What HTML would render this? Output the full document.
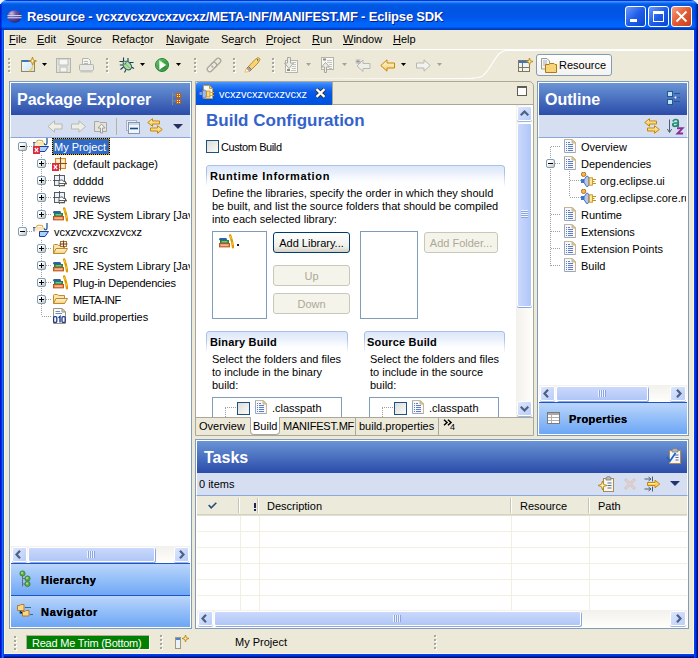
<!DOCTYPE html>
<html><head><meta charset="utf-8">
<style>
*{box-sizing:border-box;margin:0;padding:0}
html,body{width:698px;height:658px;overflow:hidden;background:#ECE9D8;font-family:"Liberation Sans",sans-serif;font-size:11px;color:#000;position:relative}
.a{position:absolute}
.t{position:absolute;white-space:nowrap;line-height:13px}
svg{position:absolute;overflow:visible}
#title{left:0;top:0;width:698px;height:30px;border-radius:7px 7px 0 0;
 background:linear-gradient(to bottom,#0831D9 0px,#0831D9 1px,#3D95FF 1px,#3D95FF 2px,#0A6AF3 3px,#0058E2 5px,#0054E3 12px,#0058EB 19px,#0062F8 22px,#0066FF 26px,#0066FF 27px,#0048D2 28px,#0035B8 30px)}
#lf{left:0;top:30px;width:5px;height:628px;background:linear-gradient(to right,#0010D0 0,#0010D0 1px,#0A30DA 1px,#0A30DA 2px,#1868F2 2px,#1868F2 3px,#0650E2 3px,#0650E2 4px,#FCF4DC 4px)}
#rf{left:693px;top:30px;width:5px;height:628px;background:linear-gradient(to right,#FCF4DC 0,#FCF4DC 1px,#0040F6 1px,#0040F6 2px,#0036E4 2px,#0036E4 3px,#0020B0 3px,#0020B0 4px,#001080 4px)}
#bf{left:4px;top:653px;width:690px;height:5px;background:linear-gradient(to bottom,#FCF4DC 0,#FCF4DC 1px,#0040F0 1px,#0040F0 2px,#0036E0 2px,#0036E0 3px,#0020A8 3px,#0020A8 4px,#001080 4px)}
.titletext{color:#fff;font-weight:bold;font-size:13px;letter-spacing:-0.18px;text-shadow:1px 1px 0 #0A1E8C}
.menu{top:33px}
.wb{position:absolute;top:6px;width:21px;height:21px;border:1px solid #fff;border-radius:3px}
.vbox{position:absolute;border:1px solid #7F9DB9;background:#fff}
.vtitle{position:absolute;border:1px solid #fff;border-bottom:0;background:linear-gradient(to bottom,#6A94D6,#2B4CA9)}
.vtt{position:absolute;color:#fff;font-weight:bold;font-size:16px;line-height:18px;white-space:nowrap}
.vtool{position:absolute;background:#D6DFF2;border-bottom:1px solid #8DA7D8;border-left:1px solid #fff;border-right:1px solid #fff}
.grip{position:absolute;width:3px;height:16px;background:linear-gradient(#A8A79A,#A8A79A) 0 0/1px 1px, linear-gradient(#A8A79A,#A8A79A) 0 4px/1px 1px, linear-gradient(#A8A79A,#A8A79A) 0 8px/1px 1px, linear-gradient(#A8A79A,#A8A79A) 0 12px/1px 1px;background-repeat:no-repeat}
.gripw{position:absolute;width:3px;height:16px;background:linear-gradient(#fff,#fff) 1px 1px/1px 1px, linear-gradient(#fff,#fff) 1px 5px/1px 1px, linear-gradient(#fff,#fff) 1px 9px/1px 1px, linear-gradient(#fff,#fff) 1px 13px/1px 1px;background-repeat:no-repeat}
.dd{position:absolute;width:5px;height:3px;background:#000;clip-path:polygon(0 0,100% 0,50% 100%)}
.ddg{background:#A5A395}
.sel{background:#316AC5;color:#fff;border:1px solid #FFB000;outline:1px dotted #000;outline-offset:-1px}
.pm{position:absolute;width:9px;height:9px;border:1px solid #7B9EBD;border-radius:2px;background:linear-gradient(135deg,#fff 30%,#C6C0B0)}
.pm:before{content:"";position:absolute;left:1px;top:3px;width:5px;height:1px;background:#000}
.plus:after{content:"";position:absolute;left:3px;top:1px;width:1px;height:5px;background:#000}
.dv{position:absolute;width:1px;background:repeating-linear-gradient(to bottom,#A0A0A0 0,#A0A0A0 1px,transparent 1px,transparent 2px)}
.dh{position:absolute;height:1px;background:repeating-linear-gradient(to right,#A0A0A0 0,#A0A0A0 1px,transparent 1px,transparent 2px)}
.sbv{position:absolute;background:linear-gradient(to right,#F3F1EC,#FEFEFB)}
.sbh{position:absolute;background:linear-gradient(to bottom,#F3F1EC,#FEFEFB)}
.sbb{position:absolute;border:1px solid #fff;border-radius:2px;background:linear-gradient(135deg,#DCE6FD,#BACDF8);box-shadow:0 1px 0 #9FB5E6}
.sth{position:absolute;border:1px solid #fff;border-radius:2px;background:linear-gradient(to bottom,#CAD8FC,#BBCEF9 60%,#AFC6F7);box-shadow:1px 1px 0 #8AA6E4}
.stv{position:absolute;border:1px solid #fff;border-radius:2px;background:linear-gradient(to right,#CAD8FC,#BBCEF9 60%,#AFC6F7);box-shadow:0 1px 0 #8AA6E4}
.btn{position:absolute;border:1px solid #003C74;border-radius:3px;background:linear-gradient(to bottom,#FFFFFF,#F0F0EA 70%,#D6D0C5);text-align:center;line-height:18px;padding-top:1px}
.btnd{border-color:#C9C7BA;background:#F5F4EA;color:#ACA899}
.sec{position:absolute;border:1px solid #A9C1EA;border-bottom:0;border-radius:3px 3px 0 0;background:linear-gradient(to bottom,#DDE7F8,#fff 20px);-webkit-mask-image:linear-gradient(to bottom,#000 8px,transparent 22px)}
.sect{position:absolute;font-weight:bold;font-size:11px;line-height:14px;white-space:nowrap;color:#000}
.list{position:absolute;border:1px solid #7F9DB9;background:#fff}
.bar{position:absolute;border-top:1px solid #2354C4;background:linear-gradient(to bottom,#BBD6FB,#6CA6F5)}
.bart{position:absolute;font-weight:bold;font-size:11px;line-height:14px;white-space:nowrap;color:#000;text-shadow:0 0 0.4px #000}
.cb{position:absolute;width:13px;height:13px;border:1px solid #1C5180;background:linear-gradient(135deg,#DCDCD7,#FBFBF9)}
</style></head><body>
<svg width="0" height="0" style="position:absolute">
<defs>
 <linearGradient id="fold" x1="0" y1="0" x2="0" y2="1"><stop offset="0" stop-color="#FFF6D0"/><stop offset="1" stop-color="#F4D080"/></linearGradient>
 <symbol id="i-lib" viewBox="0 0 16 16">
  <rect x="1.5" y="5.5" width="7" height="1.6" rx="0.5" fill="#2A6CC8" stroke="#1A4A98" stroke-width="0.8"/>
  <rect x="2.5" y="7.5" width="8" height="2.6" fill="#3CA060" stroke="#1F7A3A" stroke-width="0.9"/>
  <path d="M4 8.8H9" stroke="#A8D8B0" stroke-width="0.8"/>
  <rect x="1.5" y="10.5" width="10" height="3.4" fill="#E89060" stroke="#B84A10" stroke-width="0.9"/>
  <path d="M3 12.2H10" stroke="#F4C8A8" stroke-width="1"/>
  <path d="M12.2 2.5L13.2 5.5L14 8.5L14.6 11.5L15 14.2" fill="none" stroke="#E09A00" stroke-width="2.4" stroke-linecap="round"/>
  <path d="M12.4 3L13.4 6M14 9L14.5 12" stroke="#FFD040" stroke-width="0.9"/>
 </symbol>
 <symbol id="i-folder" viewBox="0 0 16 16">
  <path d="M1.5 4.5Q1.5 3.5 2.5 3.5H5.5L6.5 4.5H12.5V12.5H1.5Z" fill="#FBE4A8" stroke="#C08A30" stroke-linejoin="round"/>
  <path d="M4 7.5H15.5L12.5 12.5H1.5Z" fill="url(#fold)" stroke="#C08A30" stroke-linejoin="round"/>
 </symbol>
 <symbol id="i-pkg" viewBox="0 0 16 16">
  <rect x="4.5" y="3.5" width="10" height="10" fill="#F2DCB0" stroke="#D88A20"/>
  <rect x="5.5" y="4.5" width="3" height="3" fill="#FBF0C8"/><rect x="10.5" y="4.5" width="3" height="3" fill="#FBF0C8"/><rect x="10.5" y="9.5" width="3" height="3" fill="#FBF0C8"/>
  <path d="M9.5 2V15.5M1 8.5H16" stroke="#8A4A20" stroke-width="1"/>
 </symbol>
 <symbol id="i-epkg" viewBox="0 0 16 16">
  <rect x="2.5" y="3.5" width="10" height="10" fill="#EAF2FD" stroke="#4C4C4C" stroke-width="0.9"/>
  <path d="M7.5 2V15M1 8.5H7.5" stroke="#4C4C4C" stroke-width="0.9"/>
  <path d="M7 14V9.5L8.5 8H10.5L11.5 9.5H13.5V11.5" fill="#fff" stroke="#4C4C4C" stroke-width="0.9"/>
  <path d="M7 11.5H14.5M7 13.8H13" stroke="#4C4C4C" stroke-width="0.9"/>
  <path d="M13.5 10.5L15 11.5L13.5 12.5" fill="none" stroke="#4C4C4C" stroke-width="0.8"/>
 </symbol>
 <symbol id="i-err" viewBox="0 0 7 7" preserveAspectRatio="none">
  <rect x="0" y="0" width="7" height="7" fill="#DC2A40"/>
  <path d="M1.8 1.8L5.2 5.2M5.2 1.8L1.8 5.2" stroke="#fff" stroke-width="1.1"/>
 </symbol>
 <symbol id="i-proj" viewBox="0 0 17 16">
  <linearGradient id="pjy" x1="0" y1="0" x2="0" y2="1"><stop offset="0" stop-color="#F8E0A0"/><stop offset="1" stop-color="#FFF4C8"/></linearGradient>
  <path d="M4.5 4Q5 2.2 6.5 2.2H9Q10.5 2.2 11 4" fill="none" stroke="#D0A050" stroke-width="1.1"/>
  <rect x="3" y="4" width="9.5" height="4.5" fill="url(#pjy)"/>
  <path d="M1 4.5H3.5" stroke="#6A5A8A" stroke-width="1"/>
  <path d="M2 4.5V8.5" stroke="#2A4AA0" stroke-width="1"/>
  <path d="M15 0V5Q15 6.8 13.5 6.8Q12.3 6.8 12.3 5.3" fill="none" stroke="#1E5A9A" stroke-width="1.3"/>
  <path d="M7.5 8.5H16.5L13 13.5H7.5Z" fill="#A6D4F8" stroke="#2438A8" stroke-width="1" stroke-linejoin="round"/>
 </symbol>
 <symbol id="i-src" viewBox="0 0 16 16">
  <path d="M1.5 5.5Q1.5 4.5 2.5 4.5H5.5L6.5 5.5H12.5V13.5H1.5Z" fill="#FBE4A8" stroke="#C08A30" stroke-linejoin="round"/>
  <path d="M4 8.5H15.5L12.5 13.5H1.5Z" fill="url(#fold)" stroke="#C08A30" stroke-linejoin="round"/>
  <rect x="8.5" y="1.5" width="6" height="5" fill="#F6E8C8" stroke="#A06828" stroke-width="0.9"/>
  <path d="M11.5 0.5V7.5M7.5 4H15.5" stroke="#6A3A18" stroke-width="0.9"/>
 </symbol>
 <symbol id="i-bin" viewBox="0 0 16 16">
  <path d="M1.5 0.5H10L13.5 4V15.5H1.5Z" fill="#FAFAFC" stroke="#9C9478"/>
  <path d="M10 0.5V4H13.5Z" fill="#E8E4D4" stroke="#9C9478"/>
  <path d="M3.5 3.5H8M3.5 5.5H10" stroke="#6A8AC8" stroke-width="1"/>
  <rect x="1.6" y="8.6" width="3.2" height="5.8" rx="1.2" fill="none" stroke="#1E3A8A" stroke-width="1.3"/>
  <path d="M6.5 9.8L8 8.5V14.6" fill="none" stroke="#1E3A8A" stroke-width="1.4"/>
  <rect x="10" y="8.6" width="3.2" height="5.8" rx="1.2" fill="none" stroke="#1E3A8A" stroke-width="1.3"/>
 </symbol>
 <symbol id="i-page" viewBox="0 0 12 14">
  <path d="M0.5 0.5H8L11.5 4V13.5H0.5Z" fill="#F6F8FD" stroke="#9AA6C0"/>
  <path d="M0.5 0.5H8L11.5 4V13.5" fill="none" stroke="#C8B68C"/>
  <path d="M8 0.5V4H11.5Z" fill="#E4CC90" stroke="#C8B68C"/>
  <path d="M2 3.5h1M4 3.5h2M2 5.5h1M4 5.5h5M2 7.5h1M4 7.5h5M2 9.5h1M4 9.5h5M2 11.5h1M4 11.5h5" stroke="#5C7CC4" stroke-width="1"/>
 </symbol>
 <symbol id="i-plug" viewBox="0 0 16 15">
  <circle cx="2.6" cy="2.3" r="2.2" fill="#F7B850" stroke="#A86818" stroke-width="0.9"/>
  <rect x="0" y="7" width="3" height="4" fill="#3C78D8"/>
  <path d="M3 8L5.5 4.2H6.8L8 6V12.5L6.8 14.5H5.5L3 10.5Z" fill="#B8C8E4" stroke="#2F64C8" stroke-width="0.9"/>
  <rect x="8.2" y="5.8" width="3.2" height="7.4" fill="#FCE9A0" stroke="#C89018" stroke-width="0.9"/>
  <path d="M11.5 7.5H15M11.5 11.5H15M11.5 9.5H13.5" stroke="#C89018" stroke-width="1.1"/>
 </symbol>
 <symbol id="i-grip" viewBox="0 0 4 17">
  <g fill="#fff"><rect x="1" y="1" width="2" height="2"/><rect x="1" y="5" width="2" height="2"/><rect x="1" y="9" width="2" height="2"/><rect x="1" y="13" width="2" height="2"/></g>
  <g fill="#A9A79A"><rect x="0" y="0" width="2" height="2"/><rect x="0" y="4" width="2" height="2"/><rect x="0" y="8" width="2" height="2"/><rect x="0" y="12" width="2" height="2"/></g>
 </symbol>
 <symbol id="i-chev" viewBox="0 0 9 6"><path d="M0.7 5.3L4.5 1.5L8.3 5.3" fill="none" stroke="#4D6185" stroke-width="2.2"/></symbol>
</defs></svg>
<!-- ===== window frame ===== -->
<div class="a" style="left:0;top:0;width:698px;height:8px;background:#F0F4FC"></div>
<div class="a" id="title"></div>
<div class="a" style="left:694px;top:4px;width:4px;height:26px;background:linear-gradient(to right,rgba(0,32,176,0),rgba(0,32,176,0.5) 50%,#001080)"></div>
<div class="a" style="left:0;top:4px;width:2px;height:26px;background:linear-gradient(to right,#0010D0,rgba(0,16,208,0.3))"></div>
<div class="a" id="lf"></div>
<div class="a" id="rf"></div>
<div class="a" id="bf"></div>
<svg style="left:6px;top:9px" width="16" height="14" viewBox="0 0 16 14">
 <defs><radialGradient id="eg" cx="0.3" cy="0.25" r="0.85"><stop offset="0" stop-color="#E0B8D8"/><stop offset="0.35" stop-color="#6A5AA8"/><stop offset="1" stop-color="#262070"/></radialGradient></defs>
 <ellipse cx="8.5" cy="7.5" rx="7" ry="6.2" fill="url(#eg)"/>
 <rect x="1.5" y="6" width="14" height="1.1" fill="#C8D4F4"/><rect x="1.5" y="8.2" width="14" height="1.1" fill="#C8D4F4"/>
</svg>
<div class="t titletext" style="left:27px;top:10px">Resource - vcxzvcxzvcxzvcxz/META-INF/MANIFEST.MF - Eclipse SDK</div>
<!-- window buttons -->
<div class="wb" style="left:625px;background:linear-gradient(135deg,#6C9BFF,#1F5DE8 50%,#0A45D0)"><div class="a" style="left:4px;top:12px;width:7px;height:3px;background:#fff"></div></div>
<div class="wb" style="left:648px;background:linear-gradient(135deg,#6C9BFF,#1F5DE8 50%,#0A45D0)"><div class="a" style="left:4px;top:4px;width:11px;height:11px;border:1px solid #fff;border-top-width:3px"></div></div>
<div class="wb" style="left:671px;background:linear-gradient(135deg,#F5A086,#E25A30 50%,#C8401C)">
 <svg style="left:3px;top:3px" width="13" height="13"><path d="M1.5 1.5L11.5 11.5M11.5 1.5L1.5 11.5" stroke="#fff" stroke-width="2"/></svg></div>

<!-- ===== menu ===== -->
<div class="t menu" style="left:9px"><u>F</u>ile</div>
<div class="t menu" style="left:37px"><u>E</u>dit</div>
<div class="t menu" style="left:67px"><u>S</u>ource</div>
<div class="t menu" style="left:112px">Refac<u>t</u>or</div>
<div class="t menu" style="left:166px"><u>N</u>avigate</div>
<div class="t menu" style="left:221px">Se<u>a</u>rch</div>
<div class="t menu" style="left:266px"><u>P</u>roject</div>
<div class="t menu" style="left:312px"><u>R</u>un</div>
<div class="t menu" style="left:343px"><u>W</u>indow</div>
<div class="t menu" style="left:393px"><u>H</u>elp</div>
<div class="a" style="left:4px;top:49px;width:690px;height:1px;background:#fff"></div>

<!-- ===== toolbar ===== -->
<div class="a" style="left:506px;top:50px;width:188px;height:1px;background:#fff"></div>
<div class="a" style="left:260px;top:78px;width:214px;height:1px;background:linear-gradient(to right,rgba(255,255,255,0),rgba(255,255,255,0.5) 40%,#fff)"></div>
<svg style="left:470px;top:49px" width="40" height="31"><path d="M3 29 C12 29 14 27 20 18 C26 9 29 2 36 1.5" stroke="#fff" stroke-width="1.2" fill="none"/></svg>
<svg style="left:8px;top:58px" width="4" height="17"><use href="#i-grip"/></svg>
<svg style="left:21px;top:57px" width="16" height="16" viewBox="0 0 16 16">
 <defs><linearGradient id="nwb" x1="0" y1="0" x2="1" y2="1"><stop offset="0" stop-color="#F4FBFF"/><stop offset="1" stop-color="#C9E4F6"/></linearGradient></defs>
 <rect x="0.5" y="3.5" width="13" height="11" fill="url(#nwb)" stroke="#9C8650"/>
 <rect x="1" y="3" width="10" height="2" fill="#3A74C4"/>
 <path d="M8 14 Q12 13 12 6" stroke="#F2C94C" stroke-width="1.2" fill="none"/>
 <path d="M11.5 0L12.4 3.1L15.5 4L12.4 4.9L11.5 8L10.6 4.9L7.5 4L10.6 3.1Z" fill="#FFF4C0" stroke="#B8860B" stroke-width="0.9" stroke-linejoin="round"/>
</svg>
<div class="dd" style="left:42px;top:63px"></div>
<svg style="left:56px;top:58px" width="15" height="15" viewBox="0 0 15 15">
 <rect x="0.5" y="0.5" width="14" height="14" fill="#E3E3DE" stroke="#B4B4AE"/>
 <rect x="3" y="1" width="9" height="6" fill="#F6F6F4" stroke="#B4B4AE" stroke-width="0.8"/>
 <rect x="4" y="9" width="7" height="5" fill="#F3F3F0" stroke="#B4B4AE" stroke-width="0.8"/>
</svg>
<svg style="left:79px;top:58px" width="15" height="15" viewBox="0 0 15 15">
 <path d="M3.5 0.5H9.5L11.5 2.5V7H3.5Z" fill="#F4F4F2" stroke="#B4B4AE"/>
 <rect x="5" y="3" width="4" height="1" fill="#B8B8B4"/><rect x="5" y="5" width="4" height="1" fill="#B8B8B4"/>
 <rect x="0.5" y="6.5" width="14" height="6" rx="1" fill="#E8E8E4" stroke="#B4B4AE"/>
 <rect x="1.5" y="12" width="12" height="2.5" fill="#C8C8C2"/>
</svg>
<svg style="left:106px;top:58px" width="4" height="17"><use href="#i-grip"/></svg>
<svg style="left:119px;top:57px" width="16" height="17" viewBox="0 0 16 17">
 <path d="M4.5 0.5V5M9 1V4.5M0.5 4.5H5M0.8 8H4M1.5 12.5L4.5 10M10.5 5.5H14.5M11.5 9.5L15 11.5M5.5 15.5L7 12.5" stroke="#20404A" stroke-width="1.1" fill="none"/>
 <ellipse cx="8.3" cy="8.6" rx="3.6" ry="4.8" transform="rotate(-40 8.3 8.6)" fill="#B4DC9C" stroke="#1E5E70" stroke-width="1.1"/>
 <path d="M6 6.5L10.5 11" stroke="#78B060" stroke-width="1"/>
 <circle cx="5.6" cy="5.6" r="1.4" fill="#D8F0B8" stroke="#1E5E70" stroke-width="0.9"/>
</svg>
<div class="dd" style="left:140px;top:63px"></div>
<svg style="left:155px;top:58px" width="15" height="15" viewBox="0 0 15 15">
 <defs><linearGradient id="rg" x1="0" y1="0" x2="1" y2="1"><stop offset="0" stop-color="#8CCC88"/><stop offset="0.5" stop-color="#3A9A48"/><stop offset="1" stop-color="#1E7A30"/></linearGradient></defs>
 <circle cx="7" cy="7" r="6.5" fill="url(#rg)" stroke="#1F8A34"/>
 <circle cx="7" cy="7" r="5.2" fill="none" stroke="#5AAE60" stroke-width="0.8"/>
 <path d="M4.3 2.3L11.2 7L4.3 11.7Z" fill="#fff"/>
 <path d="M4.3 2.3L11.2 7" stroke="#7CFC50" stroke-width="0.8"/>
</svg>
<div class="dd" style="left:176px;top:63px"></div>
<svg style="left:194px;top:58px" width="4" height="17"><use href="#i-grip"/></svg>
<svg style="left:206px;top:57px" width="16" height="16" viewBox="0 0 16 16">
 <g transform="rotate(-45 8 8)" fill="none" stroke="#A9A89C" stroke-width="1.3">
  <rect x="-0.5" y="5.5" width="11" height="5" rx="2.5"/>
  <rect x="5.5" y="5.5" width="11" height="5" rx="2.5"/>
 </g>
 <g transform="rotate(-45 8 8)" fill="none" stroke="#F4F3EC" stroke-width="0.6">
  <rect x="0.6" y="6.6" width="8.8" height="2.8" rx="1.4"/>
 </g>
</svg>
<svg style="left:233px;top:58px" width="4" height="17"><use href="#i-grip"/></svg>
<svg style="left:244px;top:57px" width="17" height="16" viewBox="0 0 17 16">
 <path d="M10.5 3L13.5 0.8Q15.5 0.5 16 2.5L14 6L7.5 12.5L4.5 9.5Z" fill="#F6D27A" stroke="#C8900F" stroke-width="1" stroke-linejoin="round"/>
 <path d="M11.5 4L14.5 2" stroke="#FFF0B8" stroke-width="1"/>
 <circle cx="13.6" cy="2.9" r="0.8" fill="#2A5AA0"/>
 <path d="M4.5 9.5L7.5 12.5L5.5 14.5L2.5 11.5Z" fill="#A8A2B0" stroke="#706878" stroke-width="0.8"/>
 <path d="M2.5 11.5L5.5 14.5L0.8 15.2Z" fill="#FFFAD8" stroke="#E0B040" stroke-width="0.7"/>
</svg>
<svg style="left:272px;top:58px" width="4" height="17"><use href="#i-grip"/></svg>
<svg style="left:284px;top:57px" width="15" height="17" viewBox="0 0 15 17">
 <rect x="1.5" y="3.5" width="12" height="12" fill="#F8F8F4" stroke="#B4B4AC"/>
 <path d="M9 5.5h3M9 7.5h3M8 9.5h4M8 11.5h4M7 13.5h5" stroke="#C4C4BC"/>
 <rect x="3" y="12" width="3" height="2" fill="#8C8C88"/>
 <path d="M3.5 0.5H6.5V6H9.5L5 11.5L0.5 6H3.5Z" fill="#ECECE4" stroke="#A8A8A0" stroke-linejoin="round"/>
</svg>
<div class="dd ddg" style="left:306px;top:63px"></div>
<svg style="left:320px;top:57px" width="15" height="17" viewBox="0 0 15 17">
 <rect x="1.5" y="0.5" width="12" height="12" fill="#F8F8F4" stroke="#B4B4AC"/>
 <rect x="3" y="1.5" width="3" height="2" fill="#8C8C88"/>
 <path d="M7 3.5h5M7 5.5h5M9 7.5h3M9 9.5h3M9 11.5h3" stroke="#C4C4BC"/>
 <path d="M4.5 15.5V10H1.5L5.5 5.5L9.5 10H6.5V15.5Z" fill="#ECECE4" stroke="#A8A8A0" stroke-linejoin="round"/>
</svg>
<div class="dd ddg" style="left:342px;top:63px"></div>
<svg style="left:355px;top:59px" width="16" height="13" viewBox="0 0 16 13">
 <path d="M15 4.5H8V1L2 7L8 12.5V9.5H15Z" fill="#EEEEE8" stroke="#B8B8B0" stroke-linejoin="round"/>
 <path d="M3 0V5M0.5 2.5H5.5M1 0.5L5 4.5M5 0.5L1 4.5" stroke="#9494A0" stroke-width="0.8"/>
</svg>
<svg style="left:380px;top:59px" width="15" height="13" viewBox="0 0 15 13">
 <defs><linearGradient id="bkg" x1="0" y1="0" x2="0" y2="1"><stop offset="0" stop-color="#FFFAE0"/><stop offset="1" stop-color="#F6CC68"/></linearGradient></defs>
 <path d="M14.5 4H7V0.8L0.8 6.5L7 12.2V9H14.5Z" fill="url(#bkg)" stroke="#C8860A" stroke-linejoin="round"/>
</svg>
<div class="dd" style="left:401px;top:63px"></div>
<svg style="left:416px;top:59px" width="15" height="13" viewBox="0 0 15 13">
 <path d="M0.5 4H8V0.8L14.2 6.5L8 12.2V9H0.5Z" fill="#F2F2EE" stroke="#B8B8B0" stroke-linejoin="round"/>
</svg>
<div class="dd ddg" style="left:437px;top:63px"></div>
<svg style="left:518px;top:58px" width="15" height="14" viewBox="0 0 15 14">
 <rect x="0.5" y="2.5" width="11" height="11" fill="#EAF4FC" stroke="#857550"/>
 <rect x="1" y="3" width="10" height="2" fill="#3A74C4"/>
 <path d="M4.5 5V13M1 9.5H11" stroke="#857550"/>
 <path d="M11.5 0L12.3 2.7L15 3.5L12.3 4.3L11.5 7L10.7 4.3L8 3.5L10.7 2.7Z" fill="#FFF4C0" stroke="#B8860B" stroke-width="0.9" stroke-linejoin="round"/>
</svg>
<div class="a" style="left:536px;top:54px;width:76px;height:22px;border:1px solid #7F9DB9;border-radius:3px;background:linear-gradient(to bottom,#FEFEFE,#F4F3EE)"></div>
<svg style="left:541px;top:58px" width="16" height="15" viewBox="0 0 16 15">
 <path d="M0.5 0.5H6L8.5 3V11H0.5Z" fill="#F4F4F0" stroke="#A09C8C"/>
 <path d="M2 3H6M2 5H6M2 7H5" stroke="#8CA0C0" stroke-width="0.8"/>
 <path d="M4.5 6.5H8L9 5.5H13L14 6.5H15.5V14.5H4.5Z" fill="#F8D478" stroke="#B07818" stroke-linejoin="round"/>
</svg>
<div class="t" style="left:559px;top:59px">Resource</div>


<!-- ===== package explorer ===== -->
<div class="vbox" style="left:9px;top:81px;width:183px;height:548px"></div>
<div class="vtitle" style="left:10px;top:82px;width:181px;height:33px"></div>
<div class="vtt" style="left:17px;top:91px">Package Explorer</div>
<div class="vtool" style="left:10px;top:115px;width:181px;height:23px"></div>
<svg style="left:172px;top:92px" width="10" height="13" viewBox="0 0 10 13">
 <path d="M0.5 0V13M0.5 3H4M0.5 9H4" stroke="#8A8A8A"/>
 <rect x="4" y="1" width="5" height="5" fill="#C06010"/><rect x="4" y="7" width="5" height="5" fill="#C06010"/>
 <path d="M5 2h1v1h-1zM7 2h1v1h-1zM5 4h1v1h-1zM7 4h1v1h-1zM5 8h1v1h-1zM7 8h1v1h-1zM5 10h1v1h-1zM7 10h1v1h-1z" fill="#FFF6C0"/>
</svg>
<svg style="left:47px;top:120px" width="16" height="13" viewBox="0 0 16 13"><path d="M15 4H7.5V0.8L1 6.5L7.5 12.2V9H15Z" fill="#EEEEE8" stroke="#B8B8B0" stroke-linejoin="round"/></svg>
<svg style="left:71px;top:120px" width="16" height="13" viewBox="0 0 16 13"><path d="M0.5 4H8V0.8L14.5 6.5L8 12.2V9H0.5Z" fill="#EEEEE8" stroke="#B8B8B0" stroke-linejoin="round"/></svg>
<svg style="left:94px;top:119px" width="15" height="15" viewBox="0 0 15 15">
 <path d="M0.5 2.5H5L6 3.5H12.5V12.5H0.5Z" fill="#E4E4DC" stroke="#A8A8A0"/>
 <path d="M6.5 14V9H4L7.5 5L11 9H8.5V14Z" fill="#F2F2EE" stroke="#A0A098"/>
</svg>
<div class="a" style="left:116px;top:118px;width:1px;height:17px;background:#B8B0A0"></div>
<svg style="left:126px;top:120px" width="14" height="14" viewBox="0 0 14 14">
 <rect x="0.5" y="0.5" width="10" height="10" fill="#E8EEF6" stroke="#A8B4C4"/>
 <rect x="2.5" y="2.5" width="11" height="11" fill="#EEF6FE" stroke="#8894A8"/>
 <rect x="3" y="3" width="10" height="2" fill="#C8D8F0"/>
 <path d="M4 8.5H12" stroke="#1A4A8A" stroke-width="1.6"/>
</svg>
<svg style="left:147px;top:118px" width="17" height="17" viewBox="0 0 17 17">
 <defs><linearGradient id="lkg146" x1="0" y1="0" x2="0" y2="1"><stop offset="0" stop-color="#FFF8C8"/><stop offset="1" stop-color="#F2C040"/></linearGradient></defs>
 <path d="M5.5 0.7L0.7 4.5L5.5 8.3V6H12.5V3H5.5Z" fill="url(#lkg146)" stroke="#C8860A" stroke-linejoin="round"/>
 <path d="M10.5 7.7L15.3 11.5L10.5 15.3V13H3.5V10H10.5Z" fill="url(#lkg146)" stroke="#C8860A" stroke-linejoin="round"/>
</svg>
<div class="a" style="left:173px;top:124px;width:0;height:0;border-left:5px solid transparent;border-right:5px solid transparent;border-top:5px solid #2A2F5E"></div>

<!-- tree -->
<div class="dv" style="left:22px;top:151px;height:80px"></div>
<div class="dv" style="left:41px;top:155px;height:59px"></div>
<div class="dv" style="left:41px;top:240px;height:76px"></div>
<div class="dh" style="left:27px;top:146px;width:6px"></div>
<div class="dh" style="left:27px;top:231px;width:6px"></div>
<div class="dh" style="left:46px;top:163px;width:5px"></div>
<div class="dh" style="left:46px;top:180px;width:5px"></div>
<div class="dh" style="left:46px;top:197px;width:5px"></div>
<div class="dh" style="left:46px;top:214px;width:5px"></div>
<div class="dh" style="left:46px;top:248px;width:5px"></div>
<div class="dh" style="left:46px;top:265px;width:5px"></div>
<div class="dh" style="left:46px;top:282px;width:5px"></div>
<div class="dh" style="left:46px;top:299px;width:5px"></div>
<div class="dh" style="left:42px;top:316px;width:9px"></div>

<div class="pm" style="left:18px;top:142px"></div>
<svg style="left:32px;top:138px" width="17" height="16"><use href="#i-proj"/></svg>
<svg style="left:33px;top:146px" width="7" height="8"><use href="#i-err"/></svg>
<div class="t sel" style="left:52px;top:138px;width:58px;height:17px;line-height:17px;padding-left:1px">My Project</div>

<div class="pm plus" style="left:37px;top:159px"></div>
<svg style="left:51px;top:155px" width="16" height="16"><use href="#i-pkg"/></svg>
<svg style="left:52px;top:163px" width="7" height="8"><use href="#i-err"/></svg>
<div class="t" style="left:73px;top:158px">(default package)</div>

<div class="pm plus" style="left:37px;top:176px"></div>
<svg style="left:52px;top:172px" width="16" height="16"><use href="#i-epkg"/></svg>
<div class="t" style="left:73px;top:175px">ddddd</div>

<div class="pm plus" style="left:37px;top:193px"></div>
<svg style="left:52px;top:189px" width="16" height="16"><use href="#i-epkg"/></svg>
<div class="t" style="left:73px;top:192px">reviews</div>

<div class="pm plus" style="left:37px;top:210px"></div>
<svg style="left:52px;top:206px" width="16" height="16"><use href="#i-lib"/></svg>
<div class="t" style="left:73px;top:209px;width:117px;overflow:hidden">JRE System Library [JavaSE-1.6]</div>

<div class="pm" style="left:18px;top:227px"></div>
<svg style="left:32px;top:223px" width="17" height="16"><use href="#i-proj"/></svg>
<div class="t" style="left:54px;top:226px">vcxzvcxzvcxzvcxz</div>

<div class="pm plus" style="left:37px;top:244px"></div>
<svg style="left:52px;top:240px" width="16" height="16"><use href="#i-src"/></svg>
<div class="t" style="left:73px;top:243px">src</div>

<div class="pm plus" style="left:37px;top:261px"></div>
<svg style="left:52px;top:257px" width="16" height="16"><use href="#i-lib"/></svg>
<div class="t" style="left:73px;top:260px;width:117px;overflow:hidden">JRE System Library [JavaSE-1.6]</div>

<div class="pm plus" style="left:37px;top:278px"></div>
<svg style="left:52px;top:274px" width="16" height="16"><use href="#i-lib"/></svg>
<div class="t" style="left:73px;top:277px;letter-spacing:-0.25px">Plug-in Dependencies</div>

<div class="pm plus" style="left:37px;top:295px"></div>
<svg style="left:52px;top:291px" width="16" height="16"><use href="#i-folder"/></svg>
<div class="t" style="left:73px;top:294px;letter-spacing:-0.4px">META-INF</div>

<svg style="left:52px;top:308px" width="16" height="16"><use href="#i-bin"/></svg>
<div class="t" style="left:73px;top:311px">build.properties</div>

<!-- PE hscroll -->
<div class="sbh" style="left:11px;top:546px;width:179px;height:17px"></div>
<div class="sbb" style="left:12px;top:547px;width:15px;height:15px"></div>
<svg style="left:15px;top:550px" width="6" height="9" viewBox="0 0 6 9"><path d="M5 0.7L1.5 4.5L5 8.3" fill="none" stroke="#4D6185" stroke-width="2.2"/></svg>
<div class="sth" style="left:28px;top:547px;width:127px;height:15px"></div>
<div class="a" style="left:87px;top:551px;width:8px;height:7px;background:repeating-linear-gradient(to right,#EEF4FE 0,#EEF4FE 1px,#8CA4E4 1px,#8CA4E4 2px)"></div>
<div class="sbb" style="left:174px;top:547px;width:15px;height:15px"></div>
<svg style="left:179px;top:550px" width="6" height="9" viewBox="0 0 6 9"><path d="M1 0.7L4.5 4.5L1 8.3" fill="none" stroke="#4D6185" stroke-width="2.2"/></svg>

<div class="bar" style="left:11px;top:563px;width:179px;height:33px"></div>
<svg style="left:19px;top:570px" width="12" height="18" viewBox="0 0 12 18">
 <path d="M3.5 5V16.5M3.5 8.5H7M3.5 14H7" stroke="#6E6E78" stroke-width="1"/>
 <circle cx="3.5" cy="3.5" r="2.6" fill="#5CAE4C" stroke="#2E7A30" stroke-width="0.8"/>
 <circle cx="8.5" cy="8.5" r="2.6" fill="#5CAE4C" stroke="#2E7A30" stroke-width="0.8"/>
 <circle cx="8.5" cy="14" r="2.6" fill="#5CAE4C" stroke="#2E7A30" stroke-width="0.8"/>
 <circle cx="3" cy="3" r="0.9" fill="#B8E0A8"/><circle cx="8" cy="8" r="0.9" fill="#B8E0A8"/><circle cx="8" cy="13.5" r="0.9" fill="#B8E0A8"/>
</svg>
<div class="bart" style="left:41px;top:573px;letter-spacing:0.5px">Hierarchy</div>
<div class="bar" style="left:11px;top:595px;width:179px;height:32px"></div>
<svg style="left:17px;top:604px" width="17" height="13" viewBox="0 0 17 13">
 <path d="M3 6V9.5H6M8 3.5H14M13 10.5H16" stroke="#2E6E9E" stroke-width="1"/>
 <path d="M0.5 1.5H3L3.8 0.5H7V6.5H0.5Z" fill="#F8D888" stroke="#B07020" stroke-width="0.9"/>
 <path d="M5.5 7.5H8L8.8 6.5H12V12H5.5Z" fill="#F8D888" stroke="#B07020" stroke-width="0.9"/>
</svg>
<div class="bart" style="left:41px;top:605px;letter-spacing:0.7px">Navigator</div>
<div class="a" style="left:10px;top:627px;width:181px;height:1px;background:#fff"></div>


<!-- ===== editor ===== -->
<div class="a" style="left:195px;top:81px;width:339px;height:355px;border:1px solid #ACA899;border-radius:0 5px 0 0;background:#ECE9D8"></div>
<div class="a" style="left:196px;top:104px;width:337px;height:313px;background:#fff;border-top:1px solid #ACA899"></div>
<!-- tab -->
<div class="a" style="left:196px;top:82px;width:137px;height:23px;border-radius:3px 0 0 0;background:linear-gradient(to bottom,#4C9BFF 0,#2F7DF8 3px,#0A5BE6 10px,#0055E5 16px,#0052E0 23px)"></div>
<div class="a" style="left:332px;top:82px;width:1px;height:23px;background:#ACA899"></div>
<svg style="left:199px;top:85px" width="16" height="15" viewBox="0 0 16 15">
 <path d="M4.5 0.5H10.5L13.5 3.5V13.5H4.5Z" fill="#FBFAF4" stroke="#C89A38"/>
 <path d="M10.5 0.5V3.5H13.5Z" fill="#F0DCA0" stroke="#C89A38"/>
 <rect x="0.5" y="7" width="3" height="3" fill="#7E9CD8"/>
 <path d="M3.5 5.5Q7.5 3.5 7.5 9Q7.5 14.5 3.5 12.5Z" fill="#A6B8E0" stroke="#5874B8" stroke-width="0.8"/>
 <rect x="7.5" y="6" width="3.5" height="6" fill="#F6DA80" stroke="#C08A20" stroke-width="0.8"/>
 <path d="M11 7.5H15M11 10.5H15" stroke="#E0A828" stroke-width="1.1"/>
</svg>
<div class="t" style="left:219px;top:88px;color:#fff">vcxzvcxzvcxzvcxz</div>
<svg style="left:315px;top:88px" width="11" height="10" viewBox="0 0 11 10"><path d="M1.5 1.2L9.5 8.8M9.5 1.2L1.5 8.8" stroke="#2A2A20" stroke-width="3.8"/><path d="M1.5 1.2L9.5 8.8M9.5 1.2L1.5 8.8" stroke="#fff" stroke-width="2.3"/></svg>
<svg style="left:517px;top:86px" width="10" height="10" viewBox="0 0 10 10"><rect x="0.5" y="0.5" width="9" height="9" fill="#fff" stroke="#605C50"/><rect x="1" y="1" width="8" height="1" fill="#605C50"/></svg>

<!-- content -->
<div class="t" style="left:206px;top:111px;font-size:17px;line-height:20px;font-weight:bold;color:#3462CC">Build Configuration</div>
<div class="cb" style="left:206px;top:140px"></div>
<div class="t" style="left:221px;top:141px;letter-spacing:-0.4px">Custom Build</div>

<div class="sec" style="left:206px;top:165px;width:299px;height:25px"></div>
<div class="sect" style="left:210px;top:169px;letter-spacing:0.66px">Runtime Information</div>
<div class="t" style="left:212px;top:187px;line-height:13px">Define the libraries, specify the order in which they should<br>be built, and list the source folders that should be compiled<br>into each selected library:</div>
<div class="list" style="left:212px;top:231px;width:55px;height:88px"></div>
<svg style="left:218px;top:233px" width="16" height="16"><use href="#i-lib"/></svg>
<div class="a" style="left:237px;top:244px;width:2px;height:2px;background:#201040"></div>
<div class="btn" style="left:273px;top:232px;width:77px;height:21px">Add Library...</div>
<div class="btn btnd" style="left:273px;top:265px;width:77px;height:21px">Up</div>
<div class="btn btnd" style="left:273px;top:293px;width:77px;height:21px">Down</div>
<div class="list" style="left:360px;top:231px;width:58px;height:88px"></div>
<div class="btn btnd" style="left:424px;top:232px;width:74px;height:21px">Add Folder...</div>

<div class="sec" style="left:206px;top:331px;width:142px;height:25px"></div>
<div class="sect" style="left:210px;top:335px;letter-spacing:0.18px">Binary Build</div>
<div class="t" style="left:212px;top:353px">Select the folders and files<br>to include in the binary<br>build:</div>
<div class="list" style="left:212px;top:397px;width:130px;height:21px;border-bottom:0"></div>
<div class="dh" style="left:225px;top:407px;width:11px"></div>
<div class="dv" style="left:225px;top:408px;height:9px"></div>
<div class="cb" style="left:237px;top:402px"></div>
<svg style="left:255px;top:400px" width="12" height="14"><use href="#i-page"/></svg>
<div class="t" style="left:272px;top:402px">.classpath</div>

<div class="sec" style="left:364px;top:331px;width:141px;height:25px"></div>
<div class="sect" style="left:367px;top:335px;letter-spacing:0.18px">Source Build</div>
<div class="t" style="left:370px;top:353px">Select the folders and files<br>to include in the source<br>build:</div>
<div class="list" style="left:369px;top:397px;width:130px;height:21px;border-bottom:0"></div>
<div class="dh" style="left:382px;top:407px;width:11px"></div>
<div class="dv" style="left:382px;top:408px;height:9px"></div>
<div class="cb" style="left:394px;top:402px"></div>
<svg style="left:412px;top:400px" width="12" height="14"><use href="#i-page"/></svg>
<div class="t" style="left:429px;top:402px">.classpath</div>

<!-- vscroll -->
<div class="sbv" style="left:516px;top:105px;width:17px;height:312px"></div>
<div class="sbb" style="left:517px;top:106px;width:15px;height:15px"></div>
<svg style="left:520px;top:110px" width="9" height="6"><use href="#i-chev"/></svg>
<div class="stv" style="left:517px;top:123px;width:15px;height:184px"></div>
<div class="a" style="left:521px;top:210px;width:7px;height:8px;background:repeating-linear-gradient(to bottom,#EEF4FE 0,#EEF4FE 1px,#8CA4E4 1px,#8CA4E4 2px)"></div>
<div class="sbb" style="left:517px;top:401px;width:15px;height:15px"></div>
<svg style="left:520px;top:406px;transform:scaleY(-1)" width="9" height="6"><use href="#i-chev"/></svg>

<!-- bottom tabs -->
<div class="a" style="left:196px;top:417px;width:337px;height:1px;background:#ACA899"></div>
<div class="a" style="left:250px;top:417px;width:30px;height:18px;background:#fff;border:1px solid #ACA899;border-top:0;border-radius:0 0 4px 4px"></div>
<div class="a" style="left:355px;top:418px;width:1px;height:17px;background:#ACA899"></div>
<div class="a" style="left:438px;top:418px;width:1px;height:17px;background:#ACA899"></div>
<div class="t" style="left:199px;top:420px">Overview</div>
<div class="t" style="left:253px;top:420px">Build</div>
<div class="t" style="left:283px;top:420px;letter-spacing:-0.2px">MANIFEST.MF</div>
<div class="t" style="left:359px;top:420px">build.properties</div>
<svg style="left:443px;top:419px" width="10" height="7" viewBox="0 0 10 7"><path d="M1 0.8L4 3.5L1 6.2M5 0.8L8 3.5L5 6.2" fill="none" stroke="#000" stroke-width="1.5"/></svg>
<div class="t" style="left:450px;top:422px;font-size:9px;line-height:10px">4</div>


<!-- ===== outline ===== -->
<div class="vbox" style="left:537px;top:81px;width:152px;height:355px"></div>
<div class="vtitle" style="left:538px;top:82px;width:150px;height:33px"></div>
<div class="vtt" style="left:545px;top:91px">Outline</div>
<div class="vtool" style="left:538px;top:115px;width:150px;height:23px"></div>
<svg style="left:667px;top:91px" width="14" height="14" viewBox="0 0 14 14">
 <rect x="0.5" y="0.5" width="5" height="5" fill="#BFE0F8" stroke="#1E5A8C"/>
 <rect x="0.5" y="8.5" width="5" height="5" fill="#BFE0F8" stroke="#1E5A8C"/>
 <path d="M7 2.5H13M9.5 6.5H10.5M11.5 6.5H13M7 10.5H13" stroke="#1E5A8C" stroke-width="1"/>
 <circle cx="8.5" cy="6.5" r="1" fill="#fff"/>
</svg>
<svg style="left:644px;top:118px" width="17" height="17" viewBox="0 0 17 17">
 <defs><linearGradient id="lkg643" x1="0" y1="0" x2="0" y2="1"><stop offset="0" stop-color="#FFF8C8"/><stop offset="1" stop-color="#F2C040"/></linearGradient></defs>
 <path d="M5.5 0.7L0.7 4.5L5.5 8.3V6H12.5V3H5.5Z" fill="url(#lkg643)" stroke="#C8860A" stroke-linejoin="round"/>
 <path d="M10.5 7.7L15.3 11.5L10.5 15.3V13H3.5V10H10.5Z" fill="url(#lkg643)" stroke="#C8860A" stroke-linejoin="round"/>
</svg>
<svg style="left:667px;top:118px" width="17" height="17" viewBox="0 0 17 17">
 <path d="M2.5 1.5V14M0.3 11L2.5 14.5L4.7 11" fill="none" stroke="#4A6078" stroke-width="1"/>
 <path d="M6 3.5Q6.5 1.5 8.8 1.5Q11.2 1.5 11.2 3.8V8.2H12M11 5H8.5Q5.8 5 5.8 6.8Q5.8 8.4 7.8 8.4Q10 8.4 11 6.5" fill="none" stroke="#1E8A70" stroke-width="1.7"/>
 <path d="M10 10.3H15.5L10.5 15.5H16" fill="none" stroke="#8A3092" stroke-width="1.9"/>
</svg>
<!-- tree -->
<div class="dv" style="left:550px;top:147px;height:120px"></div>
<div class="dv" style="left:569px;top:171px;height:26px"></div>
<div class="dh" style="left:551px;top:146px;width:10px"></div>
<div class="dh" style="left:555px;top:163px;width:6px"></div>
<div class="dh" style="left:570px;top:180px;width:11px"></div>
<div class="dh" style="left:570px;top:197px;width:11px"></div>
<div class="dh" style="left:551px;top:214px;width:10px"></div>
<div class="dh" style="left:551px;top:231px;width:10px"></div>
<div class="dh" style="left:551px;top:248px;width:10px"></div>
<div class="dh" style="left:551px;top:265px;width:10px"></div>
<div class="pm" style="left:546px;top:159px"></div>
<svg style="left:564px;top:139px" width="12" height="14"><use href="#i-page"/></svg>
<div class="t" style="left:581px;top:141px">Overview</div>
<svg style="left:564px;top:156px" width="12" height="14"><use href="#i-page"/></svg>
<div class="t" style="left:581px;top:158px">Dependencies</div>
<svg style="left:581px;top:172px" width="16" height="15"><use href="#i-plug"/></svg>
<div class="t" style="left:600px;top:175px">org.eclipse.ui</div>
<svg style="left:581px;top:189px" width="16" height="15"><use href="#i-plug"/></svg>
<div class="t" style="left:600px;top:192px;width:86px;overflow:hidden">org.eclipse.core.runtime</div>
<svg style="left:564px;top:207px" width="12" height="14"><use href="#i-page"/></svg>
<div class="t" style="left:581px;top:209px">Runtime</div>
<svg style="left:564px;top:224px" width="12" height="14"><use href="#i-page"/></svg>
<div class="t" style="left:581px;top:226px">Extensions</div>
<svg style="left:564px;top:241px" width="12" height="14"><use href="#i-page"/></svg>
<div class="t" style="left:581px;top:243px">Extension Points</div>
<svg style="left:564px;top:258px" width="12" height="14"><use href="#i-page"/></svg>
<div class="t" style="left:581px;top:260px">Build</div>
<!-- hscroll -->
<div class="sbh" style="left:539px;top:385px;width:148px;height:17px"></div>
<div class="sbb" style="left:540px;top:386px;width:15px;height:15px"></div>
<svg style="left:543px;top:389px" width="6" height="9" viewBox="0 0 6 9"><path d="M5 0.7L1.5 4.5L5 8.3" fill="none" stroke="#4D6185" stroke-width="2.2"/></svg>
<div class="sth" style="left:556px;top:386px;width:92px;height:15px"></div>
<div class="a" style="left:598px;top:390px;width:8px;height:7px;background:repeating-linear-gradient(to right,#EEF4FE 0,#EEF4FE 1px,#8CA4E4 1px,#8CA4E4 2px)"></div>
<div class="sbb" style="left:670px;top:386px;width:16px;height:15px"></div>
<svg style="left:676px;top:389px" width="6" height="9" viewBox="0 0 6 9"><path d="M1 0.7L4.5 4.5L1 8.3" fill="none" stroke="#4D6185" stroke-width="2.2"/></svg>
<div class="bar" style="left:539px;top:402px;width:148px;height:32px"></div>
<svg style="left:547px;top:412px" width="13" height="12" viewBox="0 0 13 12">
 <rect x="0.5" y="0.5" width="12" height="11" fill="#fff" stroke="#7A7A7A"/>
 <rect x="1" y="1" width="11" height="2" fill="#A8A8A8"/>
 <path d="M1 5.5H12M1 8.5H12M4.5 3V11" stroke="#B0B0B0"/>
</svg>
<div class="bart" style="left:569px;top:412px;letter-spacing:0.42px">Properties</div>
<div class="a" style="left:538px;top:434px;width:150px;height:1px;background:#fff"></div>


<!-- ===== tasks ===== -->
<div class="vbox" style="left:195px;top:439px;width:494px;height:190px"></div>
<div class="vtitle" style="left:196px;top:440px;width:492px;height:33px"></div>
<div class="vtt" style="left:204px;top:449px">Tasks</div>
<div class="vtool" style="left:196px;top:473px;width:492px;height:23px"></div>
<svg style="left:666px;top:448px" width="16" height="17" viewBox="0 0 16 17">
 <rect x="3.5" y="2.5" width="11" height="13" fill="#F4F6FA" stroke="#B08850"/>
 <path d="M6 2.5Q6 0.5 9 0.5Q12 0.5 12 2.5V4H6Z" fill="#B8B8B8" stroke="#808080" stroke-width="0.8"/>
 <path d="M8.5 7H12.5M9.5 9.5H12.5M9.5 12H12.5" stroke="#5A6A8A"/>
 <path d="M0.8 9L4 13L9.5 5" fill="none" stroke="#1C64D0" stroke-width="1.8"/>
</svg>
<div class="t" style="left:199px;top:478px">0 items</div>
<svg style="left:598px;top:476px" width="17" height="16" viewBox="0 0 17 16">
 <rect x="5.5" y="2.5" width="10" height="13" fill="#F6F6F2" stroke="#B08850"/>
 <path d="M8 2.5Q8 0.5 10.5 0.5Q13 0.5 13 2.5V4H8Z" fill="#B8B8B8" stroke="#808080" stroke-width="0.8"/>
 <path d="M9.5 7H13.5M9.5 9.5H13.5M9.5 12H13.5" stroke="#5A6A8A"/>
 <path d="M4.5 5L5.6 8.4L9 9.5L5.6 10.6L4.5 14L3.4 10.6L0 9.5L3.4 8.4Z" fill="#FFF2B0" stroke="#B8860B" stroke-width="0.9" stroke-linejoin="round"/>
</svg>
<svg style="left:623px;top:477px" width="14" height="14" viewBox="0 0 14 14"><path d="M2 2L12 12M12 2L2 12" stroke="#D4C4C0" stroke-width="3"/><path d="M2.5 2.5L11.5 11.5M11.5 2.5L2.5 11.5" stroke="#E0D4D0" stroke-width="1.2"/></svg>
<svg style="left:644px;top:476px" width="17" height="16" viewBox="0 0 17 16">
 <path d="M0.5 3H7M4.5 1L7 3L4.5 5M8.5 0.5V5.5M0.5 13H7M4.5 11L7 13L4.5 15M8.5 10.5V15.5" fill="none" stroke="#4A6070" stroke-width="1"/>
 <path d="M3.5 6.5H11V4.2L15.8 8L11 11.8V9.5H3.5Z" fill="#F8D060" stroke="#C8860A" stroke-linejoin="round"/>
 <path d="M4.5 7.5H11" stroke="#FFF4C0" stroke-width="0.9"/>
</svg>
<div class="a" style="left:670px;top:481px;width:0;height:0;border-left:5px solid transparent;border-right:5px solid transparent;border-top:5px solid #23336E"></div>
<!-- header -->
<div class="a" style="left:197px;top:496px;width:490px;height:19px;background:#EBEADB;border-bottom:1px solid #D6D2C2;box-shadow:0 1px 0 #E2DFD0"></div>
<div class="a" style="left:238px;top:498px;width:1px;height:15px;background:#C7C5B2"></div><div class="a" style="left:239px;top:498px;width:1px;height:15px;background:#fff"></div>
<div class="a" style="left:257px;top:498px;width:1px;height:15px;background:#C7C5B2"></div><div class="a" style="left:258px;top:498px;width:1px;height:15px;background:#fff"></div>
<div class="a" style="left:510px;top:498px;width:1px;height:15px;background:#C7C5B2"></div><div class="a" style="left:511px;top:498px;width:1px;height:15px;background:#fff"></div>
<div class="a" style="left:588px;top:498px;width:1px;height:15px;background:#C7C5B2"></div><div class="a" style="left:589px;top:498px;width:1px;height:15px;background:#fff"></div>
<svg style="left:208px;top:502px" width="9" height="7" viewBox="0 0 9 7"><path d="M0.7 3L3.2 5.8L8.3 0.8" fill="none" stroke="#2C4A78" stroke-width="1.6"/></svg>
<div class="a" style="left:254px;top:503px;width:2px;height:5px;background:#1C2850"></div><div class="a" style="left:254px;top:509px;width:2px;height:2px;background:#1C2850"></div>
<div class="t" style="left:267px;top:500px">Description</div>
<div class="t" style="left:520px;top:500px">Resource</div>
<div class="t" style="left:598px;top:500px">Path</div>
<!-- grid -->
<div class="a" style="left:197px;top:516px;width:490px;height:95px;background:repeating-linear-gradient(to bottom,transparent 0,transparent 15px,#F1EFE2 15px,#F1EFE2 16px)"></div>
<div class="a" style="left:240px;top:516px;width:1px;height:95px;background:#F1EFE2"></div>
<div class="a" style="left:259px;top:516px;width:1px;height:95px;background:#F1EFE2"></div>
<div class="a" style="left:511px;top:516px;width:1px;height:95px;background:#F1EFE2"></div>
<div class="a" style="left:589px;top:516px;width:1px;height:95px;background:#F1EFE2"></div>
<!-- hscroll -->
<div class="sbh" style="left:197px;top:610px;width:490px;height:17px"></div>
<div class="sbb" style="left:198px;top:611px;width:15px;height:15px"></div>
<svg style="left:201px;top:614px" width="6" height="9" viewBox="0 0 6 9"><path d="M5 0.7L1.5 4.5L5 8.3" fill="none" stroke="#4D6185" stroke-width="2.2"/></svg>
<div class="sth" style="left:214px;top:611px;width:367px;height:15px"></div>
<div class="a" style="left:393px;top:615px;width:8px;height:7px;background:repeating-linear-gradient(to right,#EEF4FE 0,#EEF4FE 1px,#8CA4E4 1px,#8CA4E4 2px)"></div>
<div class="sbb" style="left:670px;top:611px;width:16px;height:15px"></div>
<svg style="left:676px;top:614px" width="6" height="9" viewBox="0 0 6 9"><path d="M1 0.7L4.5 4.5L1 8.3" fill="none" stroke="#4D6185" stroke-width="2.2"/></svg>


<!-- ===== status ===== -->
<svg style="left:14px;top:636px" width="4" height="17"><use href="#i-grip"/></svg>
<div class="a" style="left:26px;top:635px;width:124px;height:15px;background:#008000;border-top:1px solid #B8A8A0;border-left:1px solid #B8A8A0;border-bottom:1px solid #fff;border-right:1px solid #fff"></div>
<div class="t" style="left:32px;top:637px;color:#fff;letter-spacing:-0.23px">Read Me Trim (Bottom)</div>
<svg style="left:160px;top:635px" width="4" height="17"><use href="#i-grip"/></svg>
<svg style="left:174px;top:635px" width="16" height="14" viewBox="0 0 16 14">
 <rect x="1.5" y="2.5" width="5" height="11" fill="#E8F4FC" stroke="#A89870"/>
 <rect x="2" y="3" width="4" height="2" fill="#4A84D0"/>
 <path d="M11.5 0L12.3 2.7L15 3.5L12.3 4.3L11.5 7L10.7 4.3L8 3.5L10.7 2.7Z" fill="#FFF4C0" stroke="#B8860B" stroke-width="0.9" stroke-linejoin="round"/>
</svg>
<div class="t" style="left:235px;top:636px">My Project</div>
<svg style="left:434px;top:635px" width="4" height="17"><use href="#i-grip"/></svg>

</body></html>
